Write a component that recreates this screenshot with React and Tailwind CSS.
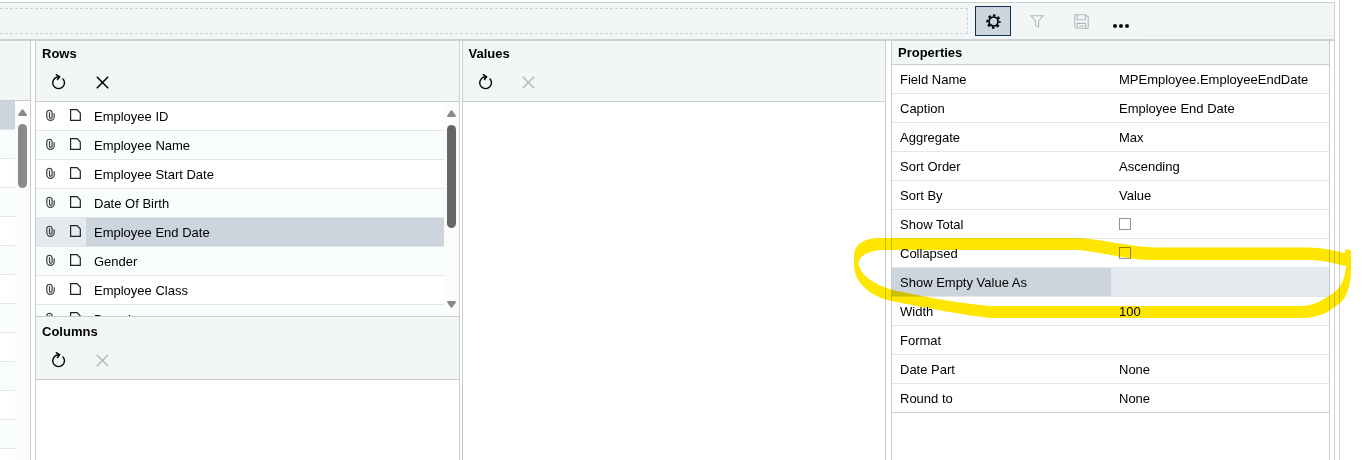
import React, { useState } from 'react';

const rowFields = [
  'Employee ID',
  'Employee Name',
  'Employee Start Date',
  'Date Of Birth',
  'Employee End Date',
  'Gender',
  'Employee Class',
  'Branch',
];

const properties = [
  { id: 'fieldName', label: 'Field Name', value: 'MPEmployee.EmployeeEndDate' },
  { id: 'caption', label: 'Caption', value: 'Employee End Date' },
  { id: 'aggregate', label: 'Aggregate', value: 'Max' },
  { id: 'sortOrder', label: 'Sort Order', value: 'Ascending' },
  { id: 'sortBy', label: 'Sort By', value: 'Value' },
  { id: 'showTotal', label: 'Show Total', type: 'checkbox' },
  { id: 'collapsed', label: 'Collapsed', type: 'checkbox' },
  { id: 'showEmptyValueAs', label: 'Show Empty Value As', value: '' },
  { id: 'width', label: 'Width', value: '100' },
  { id: 'format', label: 'Format', value: '' },
  { id: 'datePart', label: 'Date Part', value: 'None' },
  { id: 'roundTo', label: 'Round to', value: 'None' },
];

const RefreshIcon = () => (
  <svg width="16" height="18" viewBox="0 0 16 18" fill="none" stroke="currentColor" strokeWidth="1.4">
    <path d="M12.600 5.400A5.900 5.900 0 1 1 4.600 5.400Q6.400 3.900 9 3.800" />
    <path d="M5.800 1.400L9.600 3.700 7.200 7" />
  </svg>
);

const CloseIcon = () => (
  <svg width="13" height="13" viewBox="0 0 13 13" fill="none" stroke="currentColor" strokeWidth="1.5">
    <path d="M.8.8l11.400 11.400M12.200.8L.8 12.200" />
  </svg>
);

const ClipIcon = () => (
  <svg width="9" height="12" viewBox="0 0 9 12" fill="none" stroke="#3f3f39" strokeWidth="1.200">
    <path d="M.8 2.800v4.900a3.700 3.600 0 0 0 7.400 0V4.200M.8 3.200a2.800 2.600 0 0 1 5.300 0v4.700a1.300 1.300 0 0 1-2.600 0V3.200" />
  </svg>
);

const FileIcon = () => (
  <svg width="11" height="12" viewBox="0 0 11 12" fill="none" stroke="#222" strokeWidth="1.200">
    <path d="M.6.6h6.500l3.200 3.500v7.200H.6z" />
  </svg>
);

const GearIcon = () => (
  <svg width="15" height="15" viewBox="0 0 15 15" fill="none" stroke="#000">
    <circle cx="7.5" cy="7.5" r="4.5" strokeWidth="1.7" />
    <circle cx="7.5" cy="7.5" r="6.100" strokeWidth="2.200" strokeDasharray="2.600 2.191" strokeDashoffset="1.3" />
  </svg>
);

const FilterIcon = () => (
  <svg width="14" height="13" viewBox="0 0 14 13" fill="none" stroke="#b4babc" strokeWidth="1.1">
    <path d="M.9.7h12.2L8.6 6v6.1L5.4 10V6z" />
  </svg>
);

const SaveIcon = () => (
  <svg width="15" height="15" viewBox="0 0 15 15" fill="none" stroke="#b4babc" strokeWidth="1.1">
    <path d="M.8.8h11l2.4 2.4v11H2.400L.8 12.600z" />
    <path d="M3.2.8v5h8.2v-5M3.2 14.2V9.4h8.4v4.8M5 12h4.8" />
  </svg>
);

const ScrollBar = ({ children }) => (
  <div className="flex w-[15px] shrink-0 flex-col items-center bg-[#fcfcfc] py-2">
    <svg width="9" height="7" viewBox="0 0 9 7" fill="#8a8a8a">
      <path d="M3.8.5Q4.5-.2 5.2.5L8.8 5.5Q9 7 8 7H1Q0 7 .2 5.5z" />
    </svg>
    {children}
  </div>
);

const PanelHeader = ({ title, canRemove }) => (
  <div className="h-[61px] shrink-0 border-b border-[#c9cdce] bg-[#f2f6f7] px-[6px] pt-[5px]">
    <h2 className="font-bold leading-4">{title}</h2>
    <div className="mt-2 flex">
      <button type="button" aria-label="Refresh" className="flex h-6 w-8 items-center justify-center">
        <RefreshIcon />
      </button>
      <button
        type="button"
        aria-label="Remove"
        disabled={!canRemove}
        className="ml-3 flex h-6 w-8 items-center justify-center disabled:text-[#b6babb]"
      >
        <CloseIcon />
      </button>
    </div>
  </div>
);

const Toolbar = () => (
  <div className="flex h-[39px] shrink-0 border-y border-b-2 border-[#cdd1d2] bg-[#f2f6f7]">
    <div className="my-[5px] flex-1 border border-l-0 border-dashed border-[#cdd2d3]"></div>
    <button
      type="button"
      aria-label="Settings"
      className="ml-[7px] mt-[3px] flex h-[30px] w-9 items-center justify-center border border-[#12304f] bg-[#cdd6df]"
    >
      <GearIcon />
    </button>
    <button type="button" aria-label="Filter" disabled className="ml-2 mt-[3px] flex h-[30px] w-9 items-center justify-center">
      <FilterIcon />
    </button>
    <button type="button" aria-label="Save" disabled className="ml-2 mt-[3px] flex h-[30px] w-9 items-center justify-center">
      <SaveIcon />
    </button>
    <button type="button" aria-label="More" className="ml-2 mt-[3px] flex h-[30px] w-7 items-center justify-center pt-[10px]">
      <svg width="16" height="4" viewBox="0 0 16 4">
        <rect x=".2" y=".2" width="3.6" height="3.6" rx="1" />
        <rect x="6.2" y=".2" width="3.6" height="3.6" rx="1" />
        <rect x="12.2" y=".2" width="3.6" height="3.6" rx="1" />
      </svg>
    </button>
    <div className="mb-[3px] ml-[14px] w-[185px] border-b border-dotted border-[#dde1e2]"></div>
  </div>
);

const FieldList = ({ selected, onSelect }) => (
  <div className="flex h-[214px] shrink-0 overflow-hidden">
    <ul className="min-w-0 flex-1">
      {rowFields.map((field) => (
        <li key={field} className="h-[29px] border-b border-[#e3e7e8] even:bg-[#f9fdfd]">
          <button
            type="button"
            onClick={() => onSelect(field)}
            className={`flex h-7 w-full items-center text-left ${field === selected ? 'bg-[#e4eaed]' : ''}`}
          >
            <span className="flex w-[50px] shrink-0 items-center gap-[15px] pb-[2px] pl-[10px]">
              <ClipIcon />
              <FileIcon />
            </span>
            <span className={`flex h-full flex-1 items-center pl-2 pt-[2px] ${field === selected ? 'bg-[#ccd5de]' : ''}`}>
              {field}
            </span>
          </button>
        </li>
      ))}
    </ul>
    <ScrollBar>
      <div className="mt-2 h-[103px] w-[9px] rounded-full bg-[#666]"></div>
      <svg className="mt-auto" width="9" height="7" viewBox="0 0 9 7" fill="#8a8a8a">
        <path d="M3.8 6.5Q4.5 7.2 5.2 6.5L8.8 1.5Q9 0 8 0H1Q0 0 .2 1.5z" />
      </svg>
    </ScrollBar>
  </div>
);

// Hand drawn marker ring around the "Show Empty Value As" row
const Highlight = () => (
  <svg
    className="pointer-events-none absolute -left-[42px] top-[194px] mix-blend-multiply"
    width="505"
    height="90"
    viewBox="850 235 505 90"
    fill="#ffe600"
    fillRule="evenodd"
  >
    <path
      d="M880 238H1078C1100 239 1130 247 1158 247.500H1308C1324 247.500 1335 251 1345 253V250Q1348 248 1351 251V274C1350 288 1346 298 1341 302C1330 311 1322 318 1300 318H990C970 316 930 309 892 301C868 296 854 281 854 265V255C855 243 866 238 880 238Z
      M882 250C866 251 859 257 858.500 263C860 276 876 286 897 291C930 298 965 304 990 306H1300C1314 306 1322 300 1329 296C1341 289 1345 279 1346 266C1336 264 1325 260 1308 260H1150C1130 260 1100 252 1078 250Z"
    />
  </svg>
);

const PropertyGrid = () => (
  <div className="relative flex w-[439px] shrink-0 flex-col border-x border-[#c9cdce]">
    <h2 className="h-6 shrink-0 border-b border-[#c9cdce] bg-[#f2f6f7] pl-[6px] pt-1 font-bold leading-4">Properties</h2>
    <table className="w-full table-fixed border-separate border-spacing-0">
      <tbody>
        {properties.map((prop) => {
          const active = prop.id === 'showEmptyValueAs';
          return (
            <tr key={prop.id} className="group h-[29px]">
              <th
                scope="row"
                className={`w-[219px] border-b border-[#e3e7e8] p-0 pl-2 pt-[2px] text-left font-normal group-last:border-[#c9cdce] ${active ? 'bg-[#ccd5de]' : ''}`}
              >
                {prop.type === 'checkbox' ? <label htmlFor={prop.id}>{prop.label}</label> : prop.label}
              </th>
              <td
                className={`border-b border-[#e3e7e8] p-0 pl-2 group-last:border-[#c9cdce] ${prop.type === 'checkbox' ? '' : 'pt-[2px]'} ${active ? 'bg-[#e4eaed]' : ''}`}
              >
                {prop.type === 'checkbox' ? (
                  <input
                    id={prop.id}
                    type="checkbox"
                    className="block size-3 appearance-none border border-[#949494] bg-white checked:bg-[#12304f]"
                  />
                ) : (
                  prop.value
                )}
              </td>
            </tr>
          );
        })}
      </tbody>
    </table>
    <Highlight />
  </div>
);

const App = () => {
  const [selected, setSelected] = useState('Employee End Date');

  return (
    <div className="h-screen overflow-hidden bg-white pr-[22px] font-['Liberation_Sans',Arial,sans-serif] text-[13px] leading-4 text-black">
      <div className="h-full border-r border-[#cdd1d2] pr-1 pt-[2px]">
        <div className="flex h-full flex-col border-r border-[#cdd1d2]">
          <Toolbar />
          <div className="flex min-h-0 flex-1 pr-1">
            {/* Tail of the source field list */}
            <div className="flex w-[31px] shrink-0 flex-col border-r border-[#c9cdce]">
              <div className="h-[60px] shrink-0 border-b border-[#c9cdce] bg-[#f2f6f7]"></div>
              <div className="flex min-h-0 flex-1 overflow-hidden">
                <ul className="flex-1">
                  {Array.from({ length: 13 }, (_, i) => (
                    <li
                      key={i}
                      className="h-[29px] border-b border-[#e3e7e8] first:bg-[#ccd5de] even:bg-[#f9fdfd]"
                    ></li>
                  ))}
                </ul>
                <ScrollBar>
                  <div className="mt-2 h-16 w-[9px] rounded-full bg-[#8a8a8a]"></div>
                </ScrollBar>
              </div>
            </div>

            <div className="ml-1 flex min-w-0 flex-1 flex-col border-x border-[#c9cdce]">
              <PanelHeader title="Rows" canRemove />
              <FieldList selected={selected} onSelect={setSelected} />
              <div className="shrink-0 border-t border-[#c9cdce] bg-[#f2f6f7] pt-[2px]">
                <PanelHeader title="Columns" />
              </div>
            </div>

            <div className="ml-[2px] min-w-0 flex-1 border-x border-[#c9cdce]">
              <PanelHeader title="Values" />
            </div>

            <div className="ml-[5px] flex">
              <PropertyGrid />
            </div>
          </div>
        </div>
      </div>
    </div>
  );
};

export default App;
